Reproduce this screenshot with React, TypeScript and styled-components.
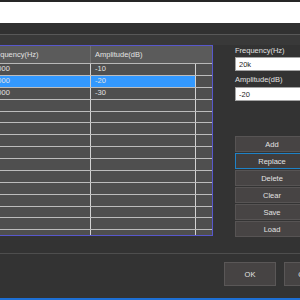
import React from 'react'
import styled, { createGlobalStyle } from 'styled-components'

const GlobalStyle = createGlobalStyle`
  html, body {
    margin: 0;
    padding: 0;
    background: #333333;
  }
`

type Point = { freq: string; amp: string }

const points: Point[] = [
  { freq: '10000', amp: '-10' },
  { freq: '20000', amp: '-20' },
  { freq: '30000', amp: '-30' },
]

const emptyRows = 12
const selectedIndex = 1

const actions = ['Add', 'Replace', 'Delete', 'Clear', 'Save', 'Load']

const App: React.FC = () => {
  const rows: (Point | null)[] = [...points, ...Array(emptyRows).fill(null)]

  return (
    <>
      <GlobalStyle />
      <Window>
        <TitleStrip />
        <AddressBar />
        <ToolBand />
        <SubBand />
        <Main>
          <Grid>
            <HeaderRow>
              <HeaderCell $divider>Frequency(Hz)</HeaderCell>
              <HeaderCell>Amplitude(dB)</HeaderCell>
            </HeaderRow>
            {rows.map((row, i) => (
              <Row key={i}>
                <Cell $selected={i === selectedIndex} $divider>{row ? row.freq : ''}</Cell>
                <Cell $selected={i === selectedIndex} $divider>{row ? row.amp : ''}</Cell>
                <Cell />
              </Row>
            ))}
          </Grid>

          <SidePanel>
            <FieldLabel>Frequency(Hz)</FieldLabel>
            <Field defaultValue="20k" />
            <FieldLabel $gap={3}>Amplitude(dB)</FieldLabel>
            <Field defaultValue="-20" $gap={2} />
            <ButtonStack>
              {actions.map((a) => (
                <ActionButton key={a} $focused={a === 'Replace'}>{a}</ActionButton>
              ))}
            </ButtonStack>
          </SidePanel>
        </Main>
        <Rule />
        <Footer>
          <DialogButton>OK</DialogButton>
          <DialogButton>Cancel</DialogButton>
        </Footer>
        <AccentBar />
      </Window>
    </>
  )
}

const Window = styled.div`
  width: 300px;
  height: 300px;
  overflow: hidden;
  display: flex;
  flex-direction: column;
  background: #333333;
  font-family: "Liberation Sans", Arial, sans-serif;
  font-size: 7.5px;
  color: #e2e2e2;
`

const TitleStrip = styled.div`
  flex: none;
  height: 2px;
  background: #262626;
`

const AddressBar = styled.div`
  flex: none;
  height: 21px;
  background: #ffffff;
`

const ToolBand = styled.div`
  flex: none;
  height: 12px;
  box-sizing: border-box;
  background: #313131;
  border-bottom: 1px solid #585858;
`

const SubBand = styled.div`
  flex: none;
  height: 10px;
  background: #393939;
`

const Main = styled.div`
  flex: none;
  height: 208px;
  display: flex;
  align-items: flex-start;
`

const Grid = styled.div`
  flex: none;
  width: 229px;
  height: 191px;
  margin-left: -16px;
  box-sizing: border-box;
  border: 1px solid #5858cc;
  background: #4f4f4f;
  overflow: hidden;
`

const HeaderRow = styled.div`
  display: grid;
  grid-template-columns: 106px 1fr;
  height: 18px;
  box-sizing: border-box;
  border-bottom: 1px solid #b8b8b8;
  background: #5b5b5b;
`

const HeaderCell = styled.div<{ $divider?: boolean }>`
  padding-left: 4px;
  line-height: 17px;
  white-space: nowrap;
  box-sizing: border-box;
  border-right: ${(p) => (p.$divider ? '1px solid #727272' : 'none')};
`

const Row = styled.div`
  display: grid;
  grid-template-columns: 106px 105px 1fr;
  height: 11.88px;
  box-sizing: border-box;
  border-bottom: 1px solid #bdbdbd;
`

const Cell = styled.div<{ $selected?: boolean; $divider?: boolean }>`
  padding-left: 4px;
  line-height: 10.88px;
  white-space: nowrap;
  box-sizing: border-box;
  background: ${(p) => (p.$selected ? '#3399ff' : 'transparent')};
  border-right: ${(p) => (p.$divider ? '1px solid #d2d2d2' : 'none')};
`

const SidePanel = styled.div`
  flex: none;
  width: 74px;
  margin-left: 22px;
  display: flex;
  flex-direction: column;
`

const FieldLabel = styled.div<{ $gap?: number }>`
  height: 11px;
  line-height: 11px;
  margin-top: ${(p) => p.$gap ?? 0}px;
  white-space: nowrap;
`

const Field = styled.input<{ $gap?: number }>`
  display: block;
  width: 100%;
  height: 14px;
  margin: ${(p) => p.$gap ?? 1}px 0 0 0;
  padding: 0 0 0 3px;
  box-sizing: border-box;
  border: 1px solid #a4a4a4;
  background: #ffffff;
  color: #1c1c1c;
  font-family: inherit;
  font-size: 7.5px;
  outline: none;
`

const ButtonStack = styled.div`
  margin-top: 35px;
  display: flex;
  flex-direction: column;
  gap: 1px;
`

const ActionButton = styled.button<{ $focused?: boolean }>`
  height: 16px;
  padding: 0;
  box-sizing: border-box;
  border: 1px solid ${(p) => (p.$focused ? '#1f82c6' : '#575454')};
  background: ${(p) => (p.$focused ? '#403d3d' : '#474444')};
  color: #e2e2e2;
  font-family: inherit;
  font-size: 7.5px;
`

const Rule = styled.div`
  flex: none;
  height: 1px;
  background: #4e4e4e;
`

const Footer = styled.div`
  flex: none;
  height: 44px;
  box-sizing: border-box;
  padding: 8px 0 0 224px;
  display: flex;
  align-items: flex-start;
  gap: 8px;
`

const DialogButton = styled.button`
  flex: none;
  width: 52px;
  height: 24px;
  padding: 0;
  box-sizing: border-box;
  border: 1px solid #5a5757;
  background: #464343;
  color: #e2e2e2;
  font-family: inherit;
  font-size: 7.5px;
`

const AccentBar = styled.div`
  flex: none;
  height: 2px;
  background: #1d6fd4;
`

export default App
